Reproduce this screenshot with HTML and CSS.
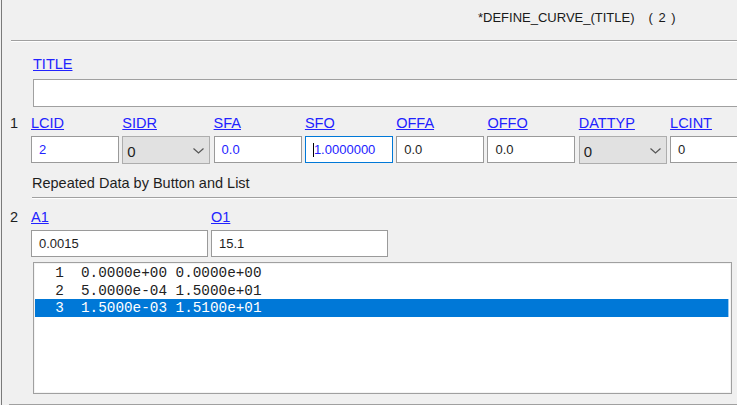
FILE: index.html
```html
<!DOCTYPE html>
<html>
<head>
<meta charset="utf-8">
<link rel="stylesheet" href="styles.css">
</head>
<body>
<div class="window">
  <div class="caption">*DEFINE_CURVE_(TITLE)<span class="count">( 2 )</span></div>
  <div class="rule rule-top"></div>

  <div class="title-block">
    <a class="lbl" href="#">TITLE</a>
    <div class="tb title-input"></div>
  </div>

  <div class="card card1">
    <div class="num">1</div>
    <div class="fields">
      <div class="field"><a class="lbl" href="#">LCID</a><div class="tb set">2</div></div>
      <div class="field"><a class="lbl" href="#">SIDR</a><div class="combo"><span>0</span><svg class="chev" width="11" height="6" viewBox="0 0 11 6"><path d="M0.5 0.5 L5.5 5 L10.5 0.5" fill="none" stroke="#555" stroke-width="1.2"/></svg></div></div>
      <div class="field"><a class="lbl" href="#">SFA</a><div class="tb set">0.0</div></div>
      <div class="field"><a class="lbl" href="#">SFO</a><div class="tb set focus"><span class="caret"></span>1.0000000</div></div>
      <div class="field"><a class="lbl" href="#">OFFA</a><div class="tb">0.0</div></div>
      <div class="field"><a class="lbl" href="#">OFFO</a><div class="tb">0.0</div></div>
      <div class="field"><a class="lbl" href="#">DATTYP</a><div class="combo"><span>0</span><svg class="chev" width="11" height="6" viewBox="0 0 11 6"><path d="M0.5 0.5 L5.5 5 L10.5 0.5" fill="none" stroke="#555" stroke-width="1.2"/></svg></div></div>
      <div class="field"><a class="lbl" href="#">LCINT</a><div class="tb">0</div></div>
    </div>
  </div>

  <div class="section-head">Repeated Data by Button and List</div>
  <div class="rule rule-mid"></div>

  <div class="card card2">
    <div class="num">2</div>
    <div class="fields2">
      <div class="field"><a class="lbl" href="#">A1</a><div class="tb">0.0015</div></div>
      <div class="field"><a class="lbl" href="#">O1</a><div class="tb">15.1</div></div>
    </div>
  </div>

  <div class="listbox">
    <div class="item">  1  0.0000e+00 0.0000e+00</div>
    <div class="item">  2  5.0000e-04 1.5000e+01</div>
    <div class="item selected">  3  1.5000e-03 1.5100e+01</div>
  </div>

  <div class="rule rule-bottom"></div>
</div>
</body>
</html>
```

FILE: styles.css
```css
html, body {
  margin: 0;
  padding: 0;
}
body {
  width: 737px;
  height: 405px;
  overflow: hidden;
  background: #f0f0f0;
  font-family: "Liberation Sans", Arial, sans-serif;
  color: #1e1e1e;
}
.window {
  margin-left: 1px;
  border-left: 1px solid #7a7a7a;
  height: 405px;
  box-sizing: border-box;
  overflow: hidden;
}
.caption {
  height: 40px;
  box-sizing: border-box;
  padding-top: 10px;
  padding-left: 476px;
  font-size: 13px;
  line-height: 15px;
  white-space: nowrap;
  color: #1a1a1a;
}
.count {
  margin-left: 14px;
  letter-spacing: 1px;
}
.rule {
  height: 0;
  border-top: 1px solid #a0a0a0;
  border-bottom: 1px solid #ffffff;
}
.rule-top { margin-left: 9px; }
.rule-mid { margin-left: 30px; margin-top: 5px; }
.rule-bottom { margin-left: 7px; margin-top: 10px; }

.lbl {
  display: block;
  font-size: 14.5px;
  line-height: 17px;
  height: 17px;
  color: #2222ff;
  text-decoration: underline;
  white-space: nowrap;
}
.title-block {
  padding-top: 14px;
  padding-left: 31px;
}
.title-block .lbl { margin-bottom: 6px; }
.tb {
  box-sizing: border-box;
  height: 27px;
  background: #ffffff;
  border: 1px solid #9a9a9a;
  padding-left: 7px;
  font-size: 13px;
  line-height: 25px;
  color: #1e1e1e;
  white-space: nowrap;
  display: flex;
  align-items: center;
}
.tb.set { color: #2222ff; }
.tb.focus { border-color: #0078d7; padding-left: 7px; }
.caret {
  width: 1px;
  height: 14px;
  background: #000;
}
.title-input {
  width: 760px;
  height: 28px;
  border-color: #a0a0a0;
}
.card {
  display: flex;
  padding-left: 8px;
}
.card1 { margin-top: 8px; }
.card2 { margin-top: 10px; }
.num {
  flex: none;
  width: 21px;
  font-size: 14.5px;
  line-height: 17px;
  color: #1e1e1e;
}
.fields {
  flex: none;
  display: grid;
  grid-template-columns: repeat(8, 88px);
  column-gap: 3.3px;
}
.fields2 {
  flex: none;
  display: grid;
  grid-template-columns: 177px 177px;
  column-gap: 3px;
}
.field .lbl { margin-bottom: 4px; }
.combo {
  box-sizing: border-box;
  height: 28px;
  background: #e1e1e1;
  border: 1px solid #adadad;
  display: flex;
  align-items: center;
  justify-content: space-between;
  padding: 3px 5px 0 4px;
  font-size: 15px;
  color: #1e1e1e;
}
.chev { margin-top: -1px; }
.section-head {
  margin-top: 11px;
  margin-left: 30px;
  font-size: 14.5px;
  line-height: 17px;
  color: #1e1e1e;
}
.listbox {
  margin-top: 5px;
  margin-left: 31px;
  width: 699px;
  height: 132px;
  box-sizing: border-box;
  background: #ffffff;
  border: 1px solid #a0a0a0;
  box-shadow: inset 0 0 0 1px #f4f4f4;
  padding: 1px 2px 0 1px;
}
.item {
  height: 17.7px;
  line-height: 18px;
  padding-left: 3px;
  font-family: "Liberation Mono", "Courier New", monospace;
  font-size: 14.33px;
  white-space: pre;
  color: #222;
}
.item.selected {
  background: #0078d7;
  color: #ffffff;
  box-shadow: inset -1px 0 0 #99c9ef;
}
```
